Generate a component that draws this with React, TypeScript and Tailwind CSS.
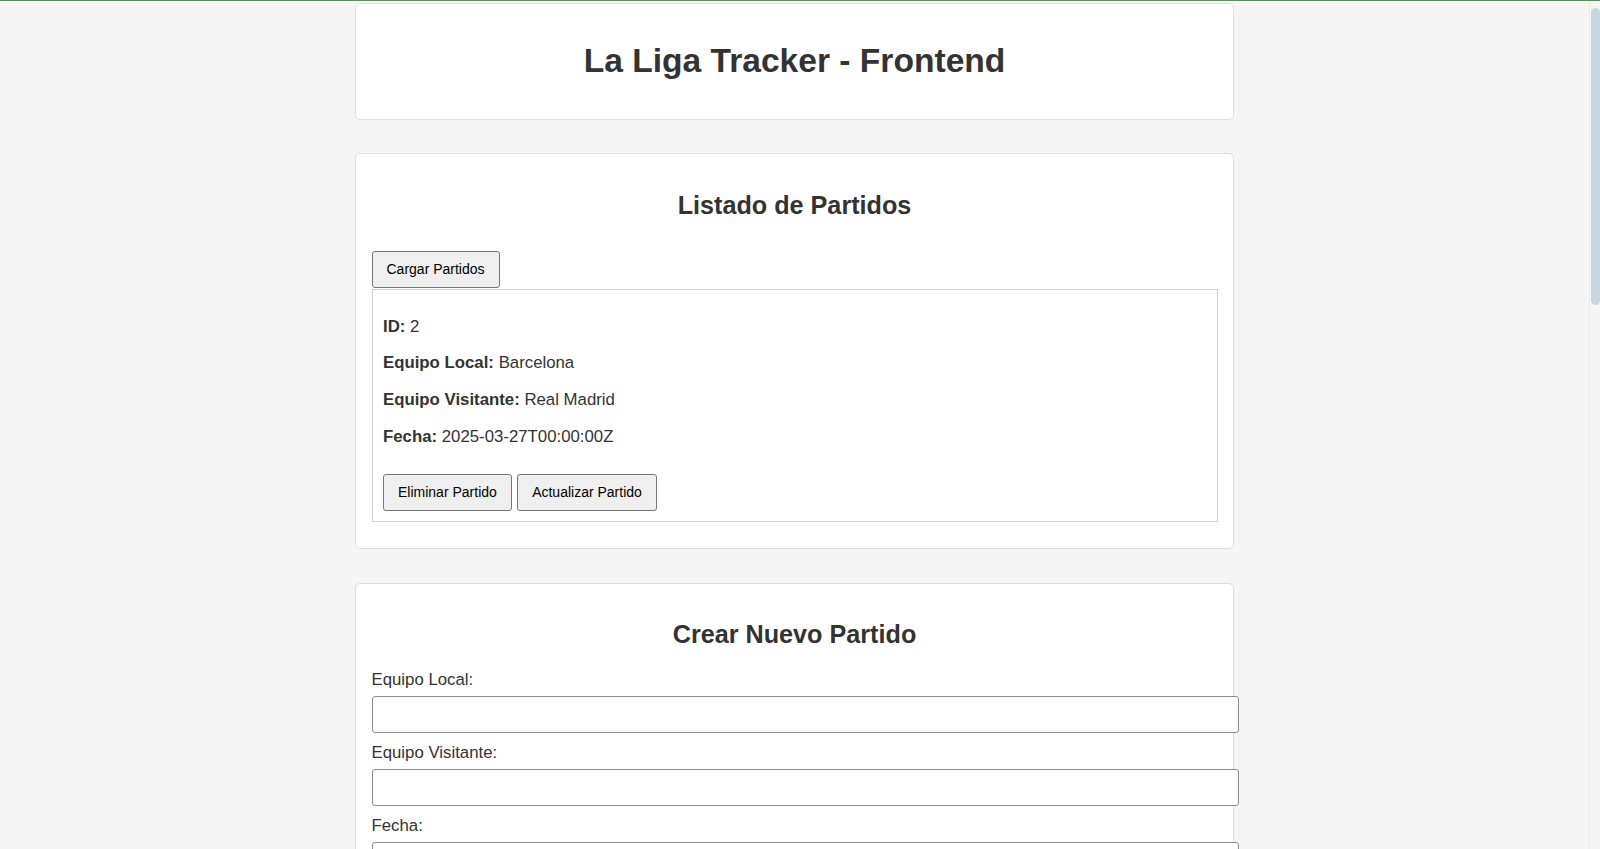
const font = "font-['Liberation_Sans','Helvetica','Arial',sans-serif]";

const btn =
  "h-[37px] px-[14px] bg-[#efefef] border border-[#767676] rounded-[3px] text-[14px] leading-[16px] text-black";

const Card = ({ children }: { children: React.ReactNode }) => (
  <div className="w-[879px] mx-auto bg-white border border-[#dedede] rounded-[5px] px-[15.5px] py-[15.5px]">
    {children}
  </div>
);

const Field = ({ label }: { label: string }) => (
  <div className="flex flex-col">
    <label className="text-[16.8px] leading-[19.3px] mb-[6.7px]">{label}</label>
    <input
      type="text"
      className="w-[867px] h-[36.6px] mb-[10.5px] bg-white border border-[#8d8d8d] rounded-[3px] px-[10px] outline-none"
    />
  </div>
);

const partido = {
  id: 2,
  local: "Barcelona",
  visitante: "Real Madrid",
  fecha: "2025-03-27T00:00:00Z",
};

export default function App() {
  return (
    <div className={`${font} h-[849px] w-full overflow-hidden bg-[#f5f5f5] text-[#333] flex flex-col`}>
      <div className="h-px w-full bg-[#5e8c5e]" />
      <div className="flex flex-1 min-h-0">
        <main className="flex-1 overflow-hidden pt-[2px] flex flex-col gap-[33.6px]">
          <Card>
            <h1 className="text-[33.6px] leading-[38.6px] font-bold text-center my-[22.5px]">
              La Liga Tracker - Frontend
            </h1>
          </Card>

          <Card>
            <h2 className="text-[25.2px] leading-[29px] font-bold text-center my-[20.9px]">
              Listado de Partidos
            </h2>
            <button className={`${btn} mt-[10.5px] mb-px`}>Cargar Partidos</button>
            <div className="border border-[#cfcfcf] px-[10.5px] pt-[9.5px] pb-[10.5px] mb-[10.5px] text-[16.8px] leading-[19.6px]">
              <p className="mt-[17.2px]">
                <strong>ID:</strong> {partido.id}
              </p>
              <p className="mt-[17.2px]">
                <strong>Equipo Local:</strong> {partido.local}
              </p>
              <p className="mt-[17.2px]">
                <strong>Equipo Visitante:</strong> {partido.visitante}
              </p>
              <p className="mt-[17.2px]">
                <strong>Fecha:</strong> {partido.fecha}
              </p>
              <div className="flex gap-[5.3px] mt-[27.3px]">
                <button className={btn}>Eliminar Partido</button>
                <button className={btn}>Actualizar Partido</button>
              </div>
            </div>
          </Card>

          <Card>
            <h2 className="text-[25.2px] leading-[29px] font-bold text-center my-[20.9px]">
              Crear Nuevo Partido
            </h2>
            <Field label="Equipo Local:" />
            <Field label="Equipo Visitante:" />
            <Field label="Fecha:" />
          </Card>
        </main>

        {/* scrollbar */}
        <div className="w-[11px] shrink-0 border-l border-[#ececec] pt-[7px]">
          <div className="w-[9px] h-[297px] ml-px rounded-full bg-[#c8d5de]" />
        </div>
      </div>
    </div>
  );
}
